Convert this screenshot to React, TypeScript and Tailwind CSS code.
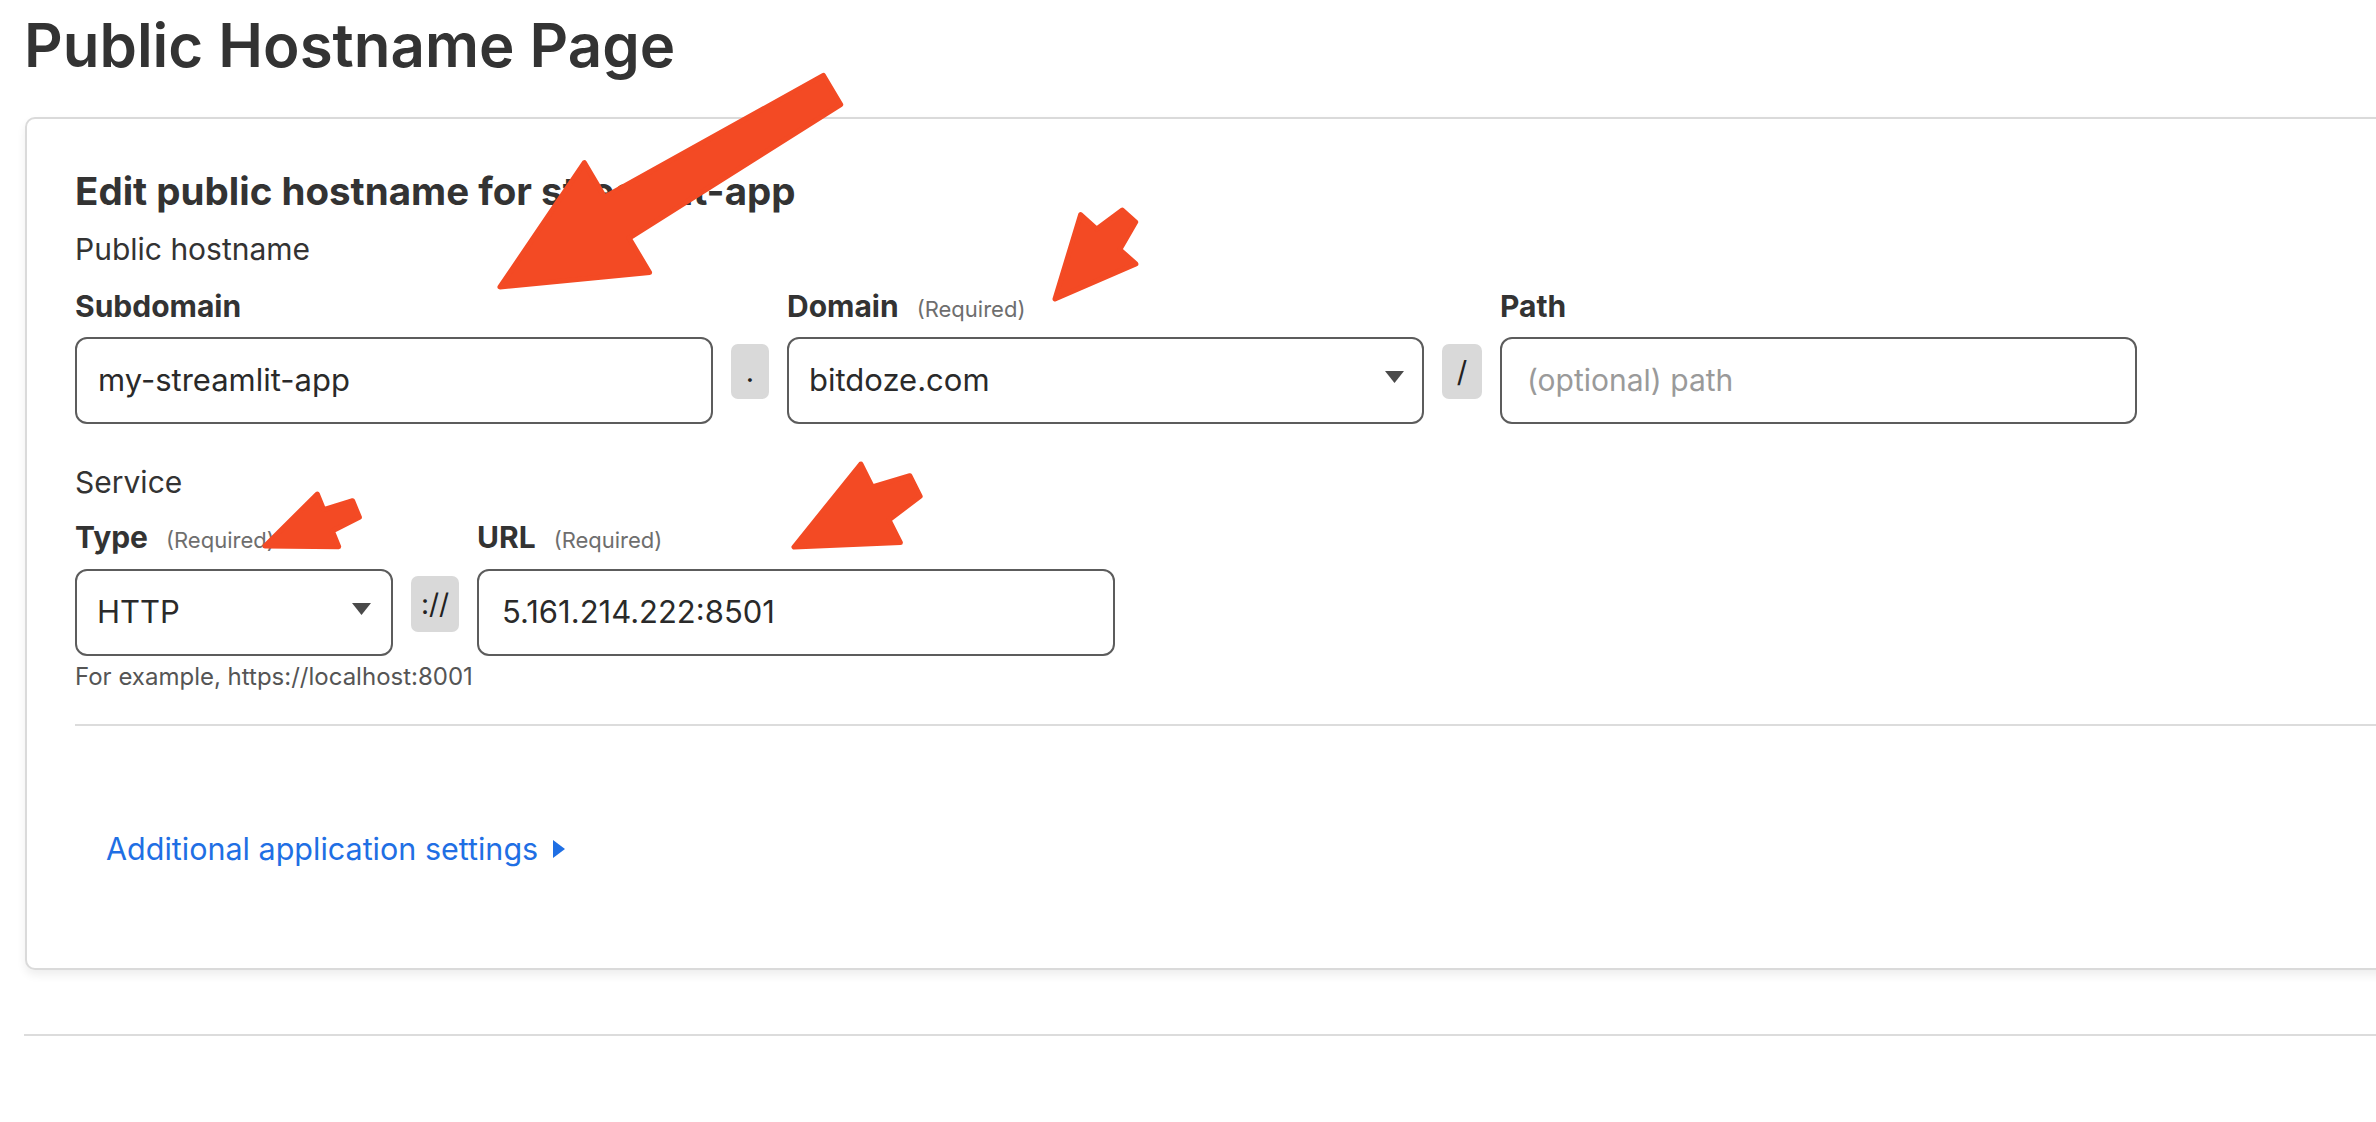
type Pt = [number, number]

// builds a fat "skitch" style arrow polygon from tail to tip
function arrowPoints(tail: Pt, tip: Pt, tailW: number, neckW: number, headW: number, headL: number) {
    const dx = tip[0] - tail[0]
    const dy = tip[1] - tail[1]
    const len = Math.hypot(dx, dy)
    const ux = dx / len
    const uy = dy / len
    const nx = -uy
    const ny = ux
    const cx = tip[0] - ux * headL
    const cy = tip[1] - uy * headL
    const p = (x: number, y: number, w: number) => `${(x + (nx * w) / 2).toFixed(1)},${(y + (ny * w) / 2).toFixed(1)}`
    return [
        p(tail[0], tail[1], tailW),
        p(cx, cy, neckW),
        p(cx, cy, headW),
        `${tip[0]},${tip[1]}`,
        p(cx, cy, -headW),
        p(cx, cy, -neckW),
        p(tail[0], tail[1], -tailW),
    ].join(' ')
}

const arrows = [
    { tail: [832, 90] as Pt, tip: [500, 287] as Pt, tailW: 34, neckW: 48, headW: 128, headL: 136 },
    { tail: [1129, 216] as Pt, tip: [1055, 299] as Pt, tailW: 18, neckW: 31, headW: 74, headL: 80 },
    { tail: [356, 509] as Pt, tip: [265, 546] as Pt, tailW: 18, neckW: 23, headW: 57, headL: 68 },
    { tail: [915, 486] as Pt, tip: [794, 547] as Pt, tailW: 23, neckW: 37, headW: 88, headL: 97 },
]

function Caret() {
    return (
        <svg width="19" height="12" viewBox="0 0 19 12" className="mb-[7px] shrink-0">
            <path d="M0 0 L19 0 L9.5 12 Z" fill="#4a4a4a" />
        </svg>
    )
}

function Label({ text, required }: { text: string; required?: boolean }) {
    return (
        <div className="flex items-baseline gap-[18px] h-[36px]">
            <span className="text-[30px] leading-[36px] font-bold text-[#333]">{text}</span>
            {required && <span className="text-[22px] text-[#6e6e6e]">(Required)</span>}
        </div>
    )
}

function Sep({ text, w }: { text: string; w: string }) {
    return (
        <div className={`${w} h-[55px] self-start mt-[7px] bg-[#d9d9d9] rounded-[7px] flex items-center justify-center text-[29px] text-[#222]`}>
            {text}
        </div>
    )
}

export default function App() {
    return (
        <div className="relative w-[2376px] h-[1122px] overflow-hidden bg-white text-[#333] font-[Inter,'Liberation_Sans',sans-serif]">
            <h1 className="pl-[24px] pt-[9px] text-[60px] leading-[72px] font-semibold text-[#333]">Public Hostname Page</h1>

            <div className="ml-[25px] mt-[36px] w-[2400px] h-[853px] border-2 border-[#dadada] rounded-[10px] bg-white shadow-[0_5px_10px_rgba(0,0,0,0.07)] pt-[51px] pl-[48px]">
                <h2 className="text-[38.5px] leading-[42px] font-bold text-[#333]">Edit public hostname for streamlit-app</h2>
                <div className="mt-[19px] text-[30px] leading-[36px]">Public hostname</div>

                <div className="mt-[21px] grid grid-cols-[638px_38px_637px_40px_637px] gap-x-[18px] gap-y-[13px]">
                    <Label text="Subdomain" />
                    <div />
                    <Label text="Domain" required />
                    <div />
                    <Label text="Path" />

                    <div className="h-[87px] border-2 border-[#5c5c5c] rounded-[12px] flex items-center pl-[21px] text-[31px] text-[#2a2a2a]">
                        my-streamlit-app
                    </div>
                    <Sep text="." w="w-[38px]" />
                    <div className="h-[87px] border-2 border-[#5c5c5c] rounded-[12px] flex items-center justify-between pl-[20px] pr-[18px] text-[31px] text-[#2a2a2a]">
                        <span>bitdoze.com</span>
                        <Caret />
                    </div>
                    <Sep text="/" w="w-[40px]" />
                    <div className="h-[87px] border-2 border-[#5c5c5c] rounded-[12px] flex items-center pl-[25px] text-[30px] text-[#9a9a9a]">
                        (optional) path
                    </div>
                </div>

                <div className="mt-[40px] text-[30px] leading-[36px]">Service</div>

                <div className="mt-[19px] grid grid-cols-[318px_48px_638px] gap-x-[18px] gap-y-[14px]">
                    <Label text="Type" required />
                    <div />
                    <Label text="URL" required />

                    <div className="h-[87px] border-2 border-[#5c5c5c] rounded-[12px] flex items-center justify-between pl-[20px] pr-[20px] text-[31px] text-[#2a2a2a]">
                        <span>HTTP</span>
                        <Caret />
                    </div>
                    <div className="w-[48px] h-[56px] self-start mt-[7px] bg-[#d9d9d9] rounded-[7px] flex items-center justify-center text-[28px] text-[#222]">
                        ://
                    </div>
                    <div className="h-[87px] border-2 border-[#5c5c5c] rounded-[12px] flex items-center pl-[23px] text-[31px] text-[#2a2a2a]">
                        5.161.214.222:8501
                    </div>
                </div>

                <p className="mt-[7px] text-[24px] leading-[28px] text-[#555]">For example, https://localhost:8001</p>

                <div className="mt-[33px] h-[2px] bg-[#dcdcdc]" />

                <button className="mt-[104px] ml-[31px] flex items-center gap-[15px] text-[30.5px] leading-[38px] text-[#1f6fe4]">
                    <span>Additional application settings</span>
                    <svg width="12" height="18" viewBox="0 0 12 18">
                        <path d="M0 0 L12 9 L0 18 Z" fill="#1f6fe4" />
                    </svg>
                </button>
            </div>

            <div className="ml-[24px] mt-[64px] h-[2px] bg-[#dcdcdc]" />

            <svg className="absolute inset-0 pointer-events-none" width="2376" height="1122" viewBox="0 0 2376 1122">
                {arrows.map((a, i) => (
                    <polygon
                        key={i}
                        points={arrowPoints(a.tail, a.tip, a.tailW, a.neckW, a.headW, a.headL)}
                        fill="#f34a24"
                        stroke="#f34a24"
                        strokeWidth="5"
                        strokeLinejoin="round"
                    />
                ))}
            </svg>
        </div>
    )
}
